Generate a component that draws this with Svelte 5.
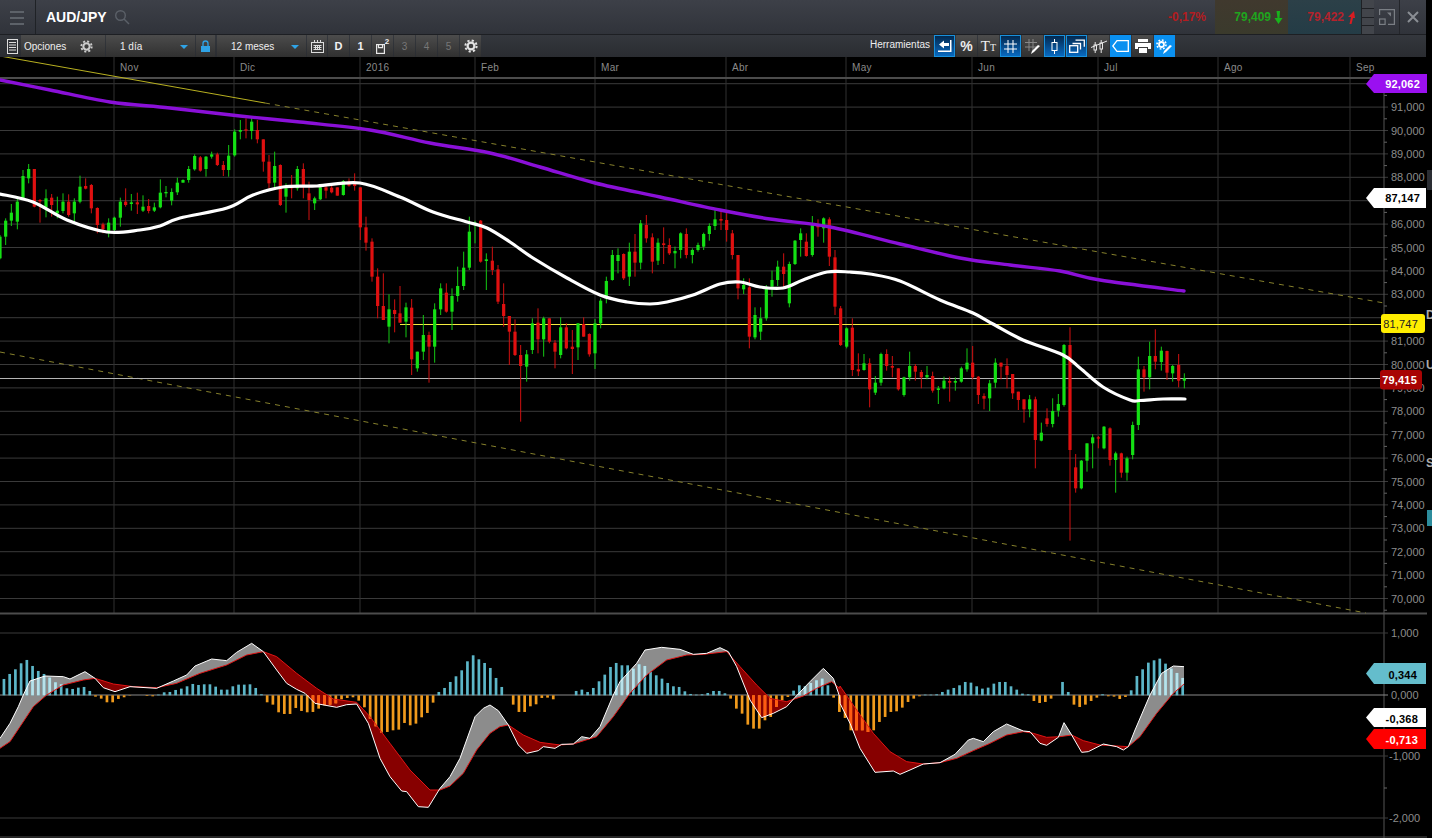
<script>
  // candles as read off the chart: [x, colour, high, bodyTop, bodyBottom, low]
  const z = (ox, oy, rows) =>
    rows.map(([x, c, a, b, d, e]) => ({ x: ox + x / 3, c, hi: oy + a / 3, top: oy + b / 3, bot: oy + d / 3, lo: oy + e / 3 }));

  const candles = [
    ...z(0, 100, [
      [0,"g",405,410,475,478],[17,"g",355,362,410,435],[34,"g",312,338,362,378],[52,"g",290,305,365,388],[69,"g",210,228,298,300],
      [86,"g",192,207,235,250],[103,"r",207,207,320,322],[120,"r",297,300,304,368],[138,"g",268,295,322,352],[155,"r",282,293,315,350],
      [172,"g",290,332,340,355],[189,"g",280,305,333,340],[206,"r",283,305,345,350],[223,"g",295,305,340,372],[240,"g",227,260,305,310],
      [257,"r",235,258,266,268],[274,"r",252,255,325,340],[292,"r",322,324,375,400],[309,"r",368,373,388,400],[326,"g",355,368,395,412],
      [343,"g",350,353,390,395],[361,"g",293,305,353,380],[377,"r",265,305,315,320],[394,"g",282,307,312,332],[412,"r",278,307,313,342],
      [429,"g",286,320,332,336],[446,"r",297,318,333,340],[463,"g",308,322,332,336],[481,"g",238,278,322,325],[498,"g",258,276,280,292],
      [515,"g",265,276,302,316],[532,"g",233,248,277,285],[549,"g",238,240,248,248],[566,"g",198,207,240,248],[584,"g",163,168,208,212],
      [601,"r",168,172,212,215],[618,"g",168,170,207,230],[635,"g",155,163,170,176],[652,"r",158,163,195,198],[670,"r",183,195,210,228],
      [686,"g",135,167,210,230],[704,"g",88,95,166,170],[721,"g",60,90,95,118],[738,"r",55,88,92,115],[755,"g",52,65,93,118],
      [772,"r",60,90,118,130],[790,"r",118,118,185,215],[807,"r",165,185,250,265],[824,"g",155,198,248,265],[841,"r",193,195,315,318],
      [858,"g",250,265,290,338],[875,"r",225,258,265,295],[892,"g",198,207,265,272],[910,"r",190,207,255,295],[927,"r",245,280,300,360],
      [944,"g",290,295,310,330],[961,"g",260,262,298,300],[978,"r",255,262,272,295],[995,"r",258,263,277,280],[1012,"r",262,262,287,287],
      [1030,"g",240,243,285,287],[1047,"r",235,245,257,260],[1064,"r",220,248,258,272],[1081,"r",262,262,382,420],[1098,"r",350,382,428,452],
      [1116,"r",415,425,530,545],[1133,"r",505,530,618,655],[1150,"r",520,618,660,660],[1167,"g",583,628,680,730],[1184,"r",598,630,642,697]
    ]),
    ...z(400, 200, [
      [0,"r",258,340,368,368],[18,"g",308,322,365,412],[35,"r",297,323,478,525],[52,"g",455,455,505,515],[70,"g",345,405,455,480],
      [87,"r",395,405,440,548],[104,"g",310,328,440,488],[122,"g",250,265,328,345],[139,"r",250,278,335,338],[156,"g",265,288,335,390],
      [173,"g",200,258,288,305],[191,"g",155,203,258,270],[208,"g",50,95,203,210],[225,"g",62,68,72,130],[242,"r",60,62,185,188],
      [259,"g",160,178,183,270],[277,"r",140,182,210,225],[294,"r",195,208,305,312],[311,"r",250,312,348,380],[328,"r",348,348,395,495],
      [345,"r",358,395,465,468],[362,"r",435,465,498,665],[380,"g",450,463,500,545],[397,"g",355,370,450,462],[414,"r",325,368,418,460],
      [431,"g",350,355,418,470],[448,"r",355,355,425,430],[465,"r",420,428,455,505],[482,"g",352,382,465,475],[499,"r",370,382,445,448],
      [517,"r",390,440,447,522],[534,"g",370,370,442,480],[551,"r",352,372,410,410],[568,"r",400,402,463,470],[585,"g",357,370,460,507],
      [602,"g",295,302,370,385],[619,"g",230,243,295,310],[637,"g",150,165,240,242],[654,"g",145,165,183,220],[671,"r",160,162,235,240],
      [688,"g",128,155,230,258],[705,"r",102,155,188,230],[722,"g",60,70,188,208],[739,"r",45,75,115,128],[757,"r",100,112,185,220],
      [774,"g",115,128,182,195],[791,"r",82,130,135,192],[808,"r",115,135,160,165],[825,"g",140,153,160,205],[842,"g",97,100,150,175],
      [859,"r",85,102,165,175],[877,"g",145,150,165,190],[894,"g",128,135,150,155],[911,"g",98,102,140,150],[928,"g",70,78,102,122],
      [945,"g",30,58,78,90],[963,"r",30,57,62,90],[980,"r",38,60,90,125],[997,"r",90,100,165,178],[1014,"r",165,165,265,298],
      [1031,"g",235,255,268,282],[1048,"r",235,262,410,445],[1065,"g",322,345,412,418],[1082,"g",322,355,395,420],[1099,"g",255,265,355,362],
      [1116,"g",212,240,260,290],[1133,"g",182,200,240,258],[1151,"r",160,200,222,265],[1168,"g",185,192,310,322],[1185,"g",120,122,192,195],
      [1202,"g",85,100,120,170],[1219,"r",100,125,168,170],[1237,"g",48,72,165,170],[1254,"r",58,75,82,110],[1271,"g",52,55,85,128],
      [1288,"r",52,58,170,198],[1305,"r",150,172,320,345],[1322,"r",318,325,435,438],[1340,"g",382,385,440,445]
    ]),
    ...z(840, 300, [
      [37,"r",55,83,210,228],[55,"r",160,208,214,228],[72,"g",162,190,210,212],[89,"r",175,190,268,322],[106,"g",228,248,278,285],
      [123,"g",158,162,248,257],[140,"r",148,162,198,212],[157,"r",168,198,203,232],[175,"r",205,205,268,272],[192,"g",230,232,285,290],
      [209,"g",155,198,232,242],[226,"r",192,198,215,242],[244,"r",210,216,232,265],[261,"g",198,225,232,238],[278,"r",215,228,272,278],
      [295,"g",258,265,270,312],[312,"g",230,242,265,268],[329,"r",230,243,248,305],[346,"g",232,243,248,272],[364,"g",200,205,245,248],
      [381,"g",145,188,208,215],[398,"r",138,188,232,238],[415,"r",228,230,285,312],[432,"r",280,288,296,328],[449,"g",240,250,295,333],
      [466,"g",175,188,248,264],[483,"r",188,188,200,238],[501,"r",175,198,225,265],[518,"r",222,222,280,297],[535,"r",275,275,300,330],
      [552,"r",298,298,328,368],[569,"g",285,298,328,352],[586,"r",290,298,420,505],[604,"g",368,398,422,424],[621,"r",325,355,372,380],
      [638,"g",295,333,372,382],[655,"g",282,312,332,350],[672,"g",132,135,315,320],[690,"r",82,135,450,722],[707,"r",462,502,565,578],
      [724,"g",480,482,565,568],[741,"g",430,430,482,515],[758,"g",402,412,430,505],[775,"r",408,412,415,445],[792,"g",378,380,445,448],
      [810,"r",382,385,480,497],[827,"g",455,460,480,578],[844,"r",458,460,518,533],[861,"g",470,475,518,542],[878,"g",365,375,465,478],
      [895,"g",170,208,375,390],[912,"r",198,208,232,275],[929,"g",125,168,232,268],[946,"r",88,168,185,208],[964,"g",140,152,186,212],
      [981,"r",152,153,218,240],[998,"g",195,198,220,245],[1016,"r",162,195,242,262],[1033,"g",220,235,242,265]
    ])
  ];

  const pts = (a) => a.map((p) => p.join(",")).join(" ");

  // moving averages are smooth curves, so run them through a catmull-rom spline
  const smooth = (a) => {
    let d = `M${a[0][0]} ${a[0][1]}`;
    for (let i = 0; i < a.length - 1; i++) {
      const p0 = a[i - 1] || a[i];
      const p1 = a[i];
      const p2 = a[i + 1];
      const p3 = a[i + 2] || p2;
      const c1 = [p1[0] + (p2[0] - p0[0]) / 6, p1[1] + (p2[1] - p0[1]) / 6];
      const c2 = [p2[0] - (p3[0] - p1[0]) / 6, p2[1] - (p3[1] - p1[1]) / 6];
      d += `C${c1[0]} ${c1[1]} ${c2[0]} ${c2[1]} ${p2[0]} ${p2[1]}`;
    }
    return d;
  };

  const purple = [[0,80],[50,90],[110,102],[170,108],[240,116],[300,122],[370,130],[430,143],[490,153],[540,167],[595,183],[660,197],[720,210],[770,219],[830,227],[900,244],[960,258],[1010,265],[1060,271],[1100,280],[1184,291]];
  const white = [[0,194],[33,202],[67,220],[107,232],[140,230],[160,226],[180,218],[227,208],[253,195],[283,187],[317,186],[360,183],[400,197],[433,212],[467,222],[487,228],[510,242],[533,258],[567,278],[600,295],[627,302],[650,304],[667,302],[693,295],[720,284],[740,282],[760,287],[783,288],[803,280],[827,272],[850,272],[870,274],[900,281],[940,300],[973,313],[993,324],[1023,340],[1063,355],[1080,368],[1103,387],[1130,400],[1140,400.5],[1163,399],[1185,399]];

  // MACD pane
  const conv = (ox, raw) => raw.map(([x, y]) => [ox + x / 3, 620 + y / 3]);
  const join = (a, b, c) => [...conv(0, a).filter((p) => p[0] <= 450), ...conv(440, b).filter((p) => p[0] > 450 && p[0] <= 840), ...conv(840, c)];

  const signal = join(
    [[0,385],[30,365],[60,320],[100,260],[140,225],[190,195],[250,180],[285,175],[340,192],[400,200],[470,203],[530,190],[600,160],[680,135],[740,105],[790,95],[830,110],[890,160],[950,205],[1000,237],[1070,247],[1110,290],[1170,370],[1230,450],[1290,510],[1320,510],[1350,498]],
    [[30,498],[70,460],[110,390],[150,340],[180,320],[205,315],[250,345],[300,367],[360,375],[400,372],[470,350],[520,290],[570,220],[620,165],[680,120],[740,105],[790,103],[860,95],[900,140],[950,195],[990,235],[1040,245],[1090,228],[1130,205],[1175,185],[1199,205]],
    [[0,198],[50,270],[100,340],[150,395],[200,425],[250,432],[300,428],[350,415],[400,392],[450,370],[500,345],[550,335],[580,340],[620,352],[660,350],[695,345],[730,362],[780,375],[865,380],[900,350],[950,280],[1000,220],[1032,192]]
  );
  const macd = join(
    [[0,355],[30,310],[55,260],[70,225],[90,183],[135,168],[190,170],[210,177],[255,155],[285,175],[310,203],[345,215],[390,200],[470,205],[520,183],[560,165],[585,138],[635,117],[680,122],[710,97],[755,70],[790,95],[830,150],[860,190],[890,208],[915,220],[945,250],[1010,262],[1040,254],[1070,252],[1105,310],[1140,415],[1170,470],[1205,513],[1220,515],[1255,560],[1285,562],[1320,505],[1350,470]],
    [[30,470],[60,415],[105,290],[130,265],[150,255],[175,272],[205,315],[235,375],[260,400],[295,392],[310,380],[345,385],[365,373],[400,372],[425,350],[450,355],[480,320],[520,225],[540,185],[590,130],[615,90],[665,82],[720,88],[760,103],[800,100],[840,83],[865,95],[890,140],[930,240],[965,293],[1000,280],[1040,260],[1065,232],[1110,185],[1150,145],[1180,175],[1199,230]],
    [[0,250],[30,310],[60,385],[105,457],[160,453],[180,463],[210,450],[250,432],[300,428],[345,403],[385,360],[400,355],[430,365],[460,335],[500,312],[550,333],[570,335],[600,370],[620,376],[655,352],[672,308],[695,345],[725,397],[745,395],[790,372],[830,380],[850,390],[865,380],[885,330],[930,225],[965,160],[1000,138],[1032,140]]
  );

  const at = (line, x) => {
    for (let i = 1; i < line.length; i++) {
      if (x <= line[i][0]) {
        const [x0, y0] = line[i - 1];
        const [x1, y1] = line[i];
        return y0 + ((y1 - y0) * (x - x0)) / (x1 - x0);
      }
    }
    return line[line.length - 1][1];
  };

  // split the band between the two lines where they cross
  const bands = { gray: [], red: [] };
  let run = [];
  let kind = null;
  const flush = () => {
    if (run.length > 1) {
      bands[kind].push(pts([...run.map((r) => [r[0], r[1]]), ...run.slice().reverse().map((r) => [r[0], r[2]])]));
    }
  };
  for (let x = 0; x <= 1184; x++) {
    const m = at(macd, x);
    const s = at(signal, x);
    const k = m <= s ? "gray" : "red";
    if (k !== kind) {
      if (kind) run.push([x, m, s]);
      flush();
      run = run.length ? [run[run.length - 1]] : [];
      kind = k;
    }
    run.push([x, m, s]);
  }
  flush();

  const ZERO = 695.3;
  const hist = [
    49,64,78,96,106,88,73,64,53,39,33,21,19,23,25,13,-4,-10,-21,-21,-11,-6,-1,0,0,-2,-3,2,9,10,16,20,27,34,31,33,33,26,17,17,27,32,32,33,22,3,-21,-28,-51,-56,-56,-38,-47,-51,-50,-40,-30,-28,-24,-12,-8,-6,-16,-36,-70,-93,-112,-110,-105,-103,-83,-90,-85,-66,-53,-22,10,
    22,40,57,75,102,120,108,97,82,52,25,0,-28,-50,-50,-33,-27,-8,-7,-12,0,0,0,13,17,10,22,42,62,85,97,90,90,80,93,88,70,60,50,37,27,25,12,4,2,3,7,13,13,6,-10,-40,-55,-88,-100,-100,-75,-65,-35,-15,-5,14,30,27,37,45,50,30,-7,-50,
    -68,-105,-105,-105,-110,-105,-80,-65,-50,-48,-37,-20,-10,-3,2,2,3,10,17,22,30,40,38,27,20,23,35,40,40,27,17,5,3,-17,-23,-20,-10,0,40,10,-28,-35,-28,-17,-7,3,-3,-4,-11,-5,15,58,78,98,105,110,95,80,67,52
  ]
    .map((h, i) => ({ x: 2.6 + i * 5.722, h: h / 3 }))
    .filter((b) => b.h !== 0);

  const months = [["Nov",114],["Dic",234],["2016",360],["Feb",475],["Mar",595],["Abr",726],["May",846],["Jun",972],["Jul",1098],["Ago",1218],["Sep",1350]];
  const STEP = 23.4;
  const priceY = (p) => 177.3 + (88 - p) * STEP;
  const prices = Array.from({ length: 23 }, (_, i) => 92 - i);
  // these sit fully behind a value tag
  const covered = [92, 87, 82];
  const macdLevels = [["1,000",633],["0,000",695],["-1,000",756],["-2,000",818]];
</script>

<div class="app">
  <header class="topbar">
    <div class="menu"><span></span><span></span><span></span></div>
    <div class="symbol">AUD/JPY</div>
    <svg class="search" width="16" height="16" viewBox="0 0 16 16" fill="none" stroke="#5b6068" stroke-width="1.4">
      <circle cx="6.5" cy="6.5" r="4.8" />
      <path d="M10 10l5 5" />
    </svg>
    <div class="grow"></div>
    <div class="change">-0,17%</div>
    <div class="quote sell">
      <span>79,409</span>
      <svg width="9" height="13" viewBox="0 0 9 13"><path d="M2.5 0h3.5l-.5 7h3l-4 6-4-6h3z" fill="#18b21c" /></svg>
    </div>
    <div class="quote buy">
      <span>79,422</span>
      <svg width="9" height="13" viewBox="0 0 9 13"><path d="M2.5 13l1.500-7H1l6-6 1 7H6l-1.500 6z" fill="#d81c22" /></svg>
    </div>
    <div class="slots"><i></i><i></i><i></i><i></i></div>
    <div class="wincell">
      <svg width="16" height="16" viewBox="0 0 16 16" fill="none" stroke="#7a7e84" stroke-width="1.2">
        <path d="M.6 6V.6h14.800v14.800H9" />
        <rect x=".6" y="10" width="5.500" height="5.400" />
        <path d="M8 3.500h4v4z" fill="#7a7e84" stroke="none" />
      </svg>
    </div>
    <div class="wincell close">
      <svg width="12" height="12" viewBox="0 0 12 12" stroke="#8a8e94" stroke-width="2"><path d="M1 1l10 10M11 1L1 11" /></svg>
    </div>
  </header>

  <div class="tools">
    <button class="cell first">
      <svg width="11" height="15" viewBox="0 0 11 15" fill="none" stroke="#ddd"><rect x=".5" y=".5" width="10" height="14" /><path d="M2 3.500h7M2 6h7M2 8.500h7M2 11h7" /></svg>
    </button>
    <button class="cell opts">
      <span>Opciones</span>
      <svg class="gear" width="13" height="13" viewBox="0 0 14 14" fill="none" stroke="#ccc"><circle cx="7" cy="7" r="3.400" stroke-width="2.200" /><circle cx="7" cy="7" r="5.600" stroke-width="2" stroke-dasharray="2.200 2.200" /></svg>
    </button>
    <button class="cell select day"><span>1 día</span><b></b></button>
    <button class="cell lock">
      <svg width="11" height="13" viewBox="0 0 11 13"><path d="M3 6V3.500a2.500 2.500 0 0 1 5 0V6" fill="none" stroke="#2fa3e6" stroke-width="1.300" /><rect x="1" y="6" width="9" height="6" fill="#2fa3e6" /></svg>
    </button>
    <button class="cell select range"><span>12 meses</span><b></b></button>
    <button class="cell small">
      <svg width="13" height="13" viewBox="0 0 13 13" fill="none" stroke="#ddd"><rect x=".5" y="2.500" width="12" height="10" /><path d="M3.500 0v3M6.500 0v3M9.500 0v3M2.500 5.500h8M2.500 7.500h8M2.500 9.500h8M4.500 5v5M6.500 5v5M8.500 5v5" /></svg>
    </button>
    <button class="cell num strong">D</button>
    <button class="cell num strong">1</button>
    <button class="cell num save">
      <svg width="9" height="10" viewBox="0 0 9 10" fill="none" stroke="#e8e8e8" stroke-width="1.200"><rect x=".6" y=".6" width="7.800" height="8.800" /><path d="M2.500.6v3h4v-3" /></svg>
      <sup>2</sup>
    </button>
    <button class="cell num dim">3</button>
    <button class="cell num dim">4</button>
    <button class="cell num dim">5</button>
    <button class="cell num">
      <svg width="14" height="14" viewBox="0 0 14 14" fill="none" stroke="#e2e2e2"><circle cx="7" cy="7" r="3.400" stroke-width="2.200" /><circle cx="7" cy="7" r="5.600" stroke-width="2" stroke-dasharray="2.200 2.200" /></svg>
    </button>

    <div class="grow"></div>
    <span class="tools-label">Herramientas</span>
    <button class="cell tool blue">
      <svg width="15" height="13" viewBox="0 0 15 13" fill="#fff"><path d="M2 4.500l5-4v2.500h5v3H7V8.500z" /><path d="M13 0h1.500v12H1v-1.400h12z" /></svg>
    </button>
    <button class="cell tool pct">%</button>
    <button class="cell tool ttext">T<small>T</small></button>
    <button class="cell tool blue">
      <svg width="13" height="13" viewBox="0 0 13 13" stroke="#fff"><path d="M4 0v13M9 0v13M0 4h13M0 9h13" /></svg>
    </button>
    <button class="cell tool">
      <svg width="16" height="15" viewBox="0 0 16 15" fill="none"><path d="M4 0v12M8 0v12M0 3.500h12M0 8h12" stroke="#888" /><path d="M15 7l-6 6-3 2 1-3 6-6z" fill="#fff" /></svg>
    </button>
    <button class="cell tool blue">
      <svg width="7" height="15" viewBox="0 0 7 15" fill="none" stroke="#fff"><rect x="1" y="3.500" width="5" height="8" /><path d="M3.500 0v3.500M3.500 11.500V15" /></svg>
    </button>
    <button class="cell tool blue">
      <svg width="16" height="14" viewBox="0 0 16 14" fill="none" stroke="#fff" stroke-width="1.300"><rect x=".7" y="6.700" width="8" height="6.600" /><path d="M3.500 4.500h8v6M6.500 1.200h8.800v6.500" /></svg>
    </button>
    <button class="cell tool">
      <svg width="16" height="15" viewBox="0 0 16 15" fill="none" stroke="#e8e8e8"><rect x="3" y="6" width="2.500" height="5" /><rect x="9" y="4" width="2.500" height="6" /><path d="M4.200 3v3M4.200 11v3M10.200 1v3M10.200 10v4M0 8.500L16 2" /></svg>
    </button>
    <button class="cell tool bright">
      <svg width="17" height="12" viewBox="0 0 17 12" fill="none" stroke="#fff" stroke-width="1.300"><path d="M5 .7h11.300v10.600H5L.8 6z" /></svg>
    </button>
    <button class="cell tool">
      <svg width="16" height="14" viewBox="0 0 16 14" fill="#fff"><rect x="3" y="0" width="10" height="3" /><path d="M0 4h16v6h-3V8H3v2H0z" /><rect x="4" y="9" width="8" height="5" /></svg>
    </button>
    <button class="cell tool bright">
      <svg width="17" height="15" viewBox="0 0 17 15" fill="none"><circle cx="5.500" cy="5.500" r="2.500" stroke="#fff" stroke-width="1.800" /><circle cx="5.500" cy="5.500" r="4.500" stroke="#fff" stroke-width="1.600" stroke-dasharray="1.800 1.700" /><path d="M16 7l-6 6-3 2 1-3 6-6z" fill="#fff" /></svg>
    </button>
    <div class="tools-end"></div>
  </div>

  <svg class="chart" viewBox="0 57 1432 781" width="1432" height="781">
    <defs>
      <clipPath id="overGray">{#each bands.gray as p}<polygon points={p} />{/each}</clipPath>
      <clipPath id="overRed">{#each bands.red as p}<polygon points={p} />{/each}</clipPath>
    </defs>

    <!-- grid -->
    {#each prices as p}
      <line x1="0" x2="1388" y1={priceY(p)} y2={priceY(p)} class="grid" />
      <line x1="1384" x2="1387" y1={priceY(p) + STEP / 2} y2={priceY(p) + STEP / 2} class="tick" />
      {#if !covered.includes(p)}
        <text x="1391" y={priceY(p) + 4} class="axis">{p},000</text>
      {/if}
    {/each}
    {#each months as [label, x]}
      <line x1={x} x2={x} y1="57" y2="613" class="vgrid" />
      <text x={x + 6} y="71" class="month">{label}</text>
    {/each}
    <line x1="0" x2="1384" y1="78" y2="78" class="sep" />
    <line x1="0" x2="1427" y1="613.5" y2="613.5" class="sep" />
    <line x1="1384" x2="1384" y1="78" y2="838" class="yaxis" />

    <!-- trend lines -->
    <line x1="0" y1="56" x2="265" y2="103" class="trend-solid" />
    <line x1="265" y1="103" x2="1384" y2="303" class="trend" />
    <line x1="0" y1="352" x2="1366" y2="613" class="trend" />
    <line x1="400" x2="1384" y1="324.500" y2="324.500" class="level" />
    <line x1="0" x2="1384" y1="378.500" y2="378.500" class="last" />

    <!-- candles -->
    {#each candles as k}
      <line x1={k.x} x2={k.x} y1={k.hi} y2={k.lo} class={k.c === "g" ? "wick up" : "wick down"} />
      <rect x={k.x - 1.6} y={k.top} width="3.200" height={Math.max(k.bot - k.top, 1.2)} class={k.c === "g" ? "body up" : "body down"} />
    {/each}

    <path d={smooth(white)} class="ma white" />
    <path d={smooth(purple)} class="ma purple" />

    <!-- MACD pane -->
    {#each macdLevels as [label, y]}
      <line x1="0" x2="1388" y1={y} y2={y} class={label === "0,000" ? "zero" : "grid"} />
      <text x={label[0] === "-" ? 1389 : 1391} y={y + 4} class="axis">{label}</text>
    {/each}
    <line x1="1384" x2="1387" y1="788" y2="788" class="tick" />
    <line x1="0" x2="1427" y1="837" y2="837" class="sep thin" />

    {#each bands.gray as p}<polygon points={p} fill="#8c8c8c" />{/each}
    {#each bands.red as p}<polygon points={p} fill="#870000" />{/each}
    {#each hist as b}
      <rect x={b.x} y={b.h > 0 ? ZERO - b.h : ZERO} width="2.700" height={Math.abs(b.h)} fill={b.h > 0 ? "#5cb6c8" : "#f09a1c"} />
    {/each}
    <g clip-path="url(#overGray)">
      {#each hist as b}
        {#if b.h > 0}<rect x={b.x} y={ZERO - b.h} width="2.700" height={b.h} fill="#b8e2ea" />{/if}
      {/each}
    </g>
    <g clip-path="url(#overRed)">
      {#each hist as b}
        {#if b.h < 0}<rect x={b.x} y={ZERO} width="2.700" height={-b.h} fill="#ff5a12" />{/if}
      {/each}
    </g>
    <polyline points={pts(signal)} class="sig" />
    <polyline points={pts(macd)} class="mac" />

    <!-- value tags -->
    <polygon points="1366,84 1374,74 1427,74 1427,93 1374,93" fill="#9a10f0" />
    <text x="1420" y="88" class="tag light">92,062</text>
    <polygon points="1366,198 1374,188 1426,188 1426,208 1374,208" fill="#fff" />
    <text x="1420" y="202" class="tag">87,147</text>
    <rect x="1381" y="314" width="44" height="19" rx="3" fill="#ffee00" />
    <text x="1418" y="328" class="tag plain">81,747</text>
    <rect x="1380" y="370" width="42" height="19.500" rx="3" fill="#a80404" />
    <text x="1417" y="384" class="tag light">79,415</text>
    <polygon points="1366,673.500 1374,663 1426,663 1426,684 1374,684" fill="#64bdcc" />
    <text x="1417" y="679" class="tag">0,344</text>
    <polygon points="1366,717.500 1374,708 1426,708 1426,727 1374,727" fill="#fff" />
    <text x="1418" y="723" class="tag">-0,368</text>
    <polygon points="1366,739 1374,729 1426,729 1426,749 1374,749" fill="#f00" />
    <text x="1418" y="744" class="tag light">-0,713</text>

    <!-- window behind, cut by the screen edge -->
    <rect x="1427" y="170" width="5" height="20" fill="#2a2d33" />
    <rect x="1427" y="510" width="5" height="16" fill="#2c8c9c" />
    <text x="1426" y="319" class="edge">D</text>
    <text x="1426" y="369" class="edge">U</text>
    <text x="1426" y="467" class="edge">S</text>
  </svg>
</div>

<style>
  :global(body) {
    background: #000;
    overflow: hidden;
  }
  .app {
    width: 1432px;
    height: 838px;
    overflow: hidden;
    font-family: "Liberation Sans", Arial, sans-serif;
    display: flex;
    flex-direction: column;
    background: #000;
  }
  .grow {
    flex: 1;
  }

  .topbar {
    width: 1426px;
    height: 35px;
    flex: none;
    box-sizing: border-box;
    display: flex;
    align-items: center;
    background: linear-gradient(#3d4048, #30333a);
    border-bottom: 1px solid #1d1f23;
  }
  .menu {
    width: 36px;
    height: 100%;
    box-sizing: border-box;
    padding: 11px 0 0 10px;
    border-right: 1px solid #1f2226;
    display: flex;
    flex-direction: column;
    gap: 4px;
  }
  .menu span {
    display: block;
    width: 14px;
    height: 2px;
    background: #5d6269;
  }
  .symbol {
    margin-left: 10px;
    color: #fff;
    font-size: 14px;
    font-weight: bold;
  }
  .search {
    margin-left: 7px;
  }
  .change {
    color: #b41c20;
    font-size: 12px;
    font-weight: bold;
    margin-right: 9px;
  }
  .quote {
    width: 73px;
    height: 100%;
    display: flex;
    align-items: center;
    justify-content: flex-end;
    gap: 3px;
    padding-right: 5px;
    box-sizing: border-box;
    font-size: 12px;
    font-weight: bold;
  }
  .sell {
    background: linear-gradient(#40392e, #3a3a2c);
    color: #1ea51e;
  }
  .buy {
    background: linear-gradient(#2c4048, #243c46);
    color: #b4222c;
  }
  .slots {
    width: 12px;
    height: 100%;
    display: flex;
    flex-direction: column;
    gap: 1px;
    padding-left: 1px;
    background: #1e2024;
  }
  .slots i {
    flex: 1;
    background: #42454b;
  }
  .wincell {
    width: 26px;
    height: 100%;
    display: flex;
    align-items: center;
    justify-content: center;
    box-sizing: border-box;
    border-right: 1px solid #23252a;
  }
  .close {
    border-right: 0;
  }

  .tools {
    width: 1426px;
    height: 22px;
    flex: none;
    display: flex;
    gap: 1px;
    background: linear-gradient(#34373d, #2a2c31);
    padding-left: 4px;
    box-sizing: border-box;
  }
  .cell {
    all: unset;
    box-sizing: border-box;
    height: 22px;
    display: flex;
    align-items: center;
    justify-content: center;
    background: linear-gradient(#4c4c4c, #303030);
    color: #eee;
    font-size: 10px;
    flex: none;
  }
  .first {
    width: 16px;
    background: none;
  }
  .opts {
    width: 84px;
    justify-content: space-between;
    padding: 0 12px 0 3px;
  }
  .select {
    justify-content: flex-start;
    position: relative;
  }
  .select b {
    position: absolute;
    right: 7px;
    top: 10px;
    border-left: 4px solid transparent;
    border-right: 4px solid transparent;
    border-top: 4px solid #2fa3e6;
  }
  .day {
    width: 89px;
    padding-left: 14px;
  }
  .lock {
    width: 19px;
  }
  .range {
    width: 89px;
    padding-left: 14px;
    margin-left: 1px;
  }
  .small {
    width: 20px;
  }
  .num {
    width: 21px;
    font-weight: bold;
    font-size: 11px;
  }
  .strong {
    color: #f2f2f2;
  }
  .dim {
    color: #777;
    font-weight: normal;
    font-size: 10px;
  }
  .save {
    gap: 0;
    align-items: flex-end;
    padding-bottom: 3px;
  }
  .save sup {
    font-size: 8px;
    line-height: 8px;
    margin-bottom: 8px;
  }
  .tools-label {
    color: #eee;
    font-size: 10px;
    line-height: 19px;
    margin-right: 3px;
  }
  .tool {
    width: 21px;
  }
  .blue {
    background: linear-gradient(#03294f, #0869c0);
    border: 1px solid #1790dc;
  }
  .bright {
    background: #0a90f0;
  }
  .pct {
    font-size: 14px;
    font-weight: bold;
  }
  .ttext {
    font-family: "Liberation Serif", serif;
    font-size: 15px;
    align-items: baseline;
    padding-top: 3px;
  }
  .ttext small {
    font-size: 10px;
  }
  .tools-end {
    width: 250px;
  }

  .chart {
    display: block;
    flex: none;
    background: #000;
  }
  .grid {
    stroke: #3a3a3a;
    stroke-width: 1;
  }
  .zero {
    stroke: #8a8a8a;
    stroke-width: 1;
  }
  .vgrid {
    stroke: #303030;
    stroke-width: 1;
  }
  .tick {
    stroke: #666;
    stroke-width: 1;
  }
  .sep {
    stroke: #4c4c4c;
    stroke-width: 2;
  }
  .thin {
    stroke-width: 1;
  }
  .yaxis {
    stroke: #555;
    stroke-width: 1;
  }
  .trend-solid {
    stroke: #b8b020;
    stroke-width: 1;
  }
  .trend {
    stroke: #86802c;
    stroke-width: 1;
    stroke-dasharray: 5 5;
  }
  .level {
    stroke: #f4ec40;
    stroke-width: 1;
  }
  .last {
    stroke: #b4b4b4;
    stroke-width: 1;
  }
  .wick {
    stroke-width: 1;
  }
  .wick.up {
    stroke: #14c814;
  }
  .wick.down {
    stroke: #d01010;
  }
  .body.up {
    fill: #14e014;
  }
  .body.down {
    fill: #e01010;
  }
  .ma {
    fill: none;
    stroke-linejoin: round;
    stroke-linecap: round;
  }
  .ma.white {
    stroke: #fff;
    stroke-width: 3.200;
  }
  .ma.purple {
    stroke: #8a10d8;
    stroke-width: 3.400;
  }
  .sig {
    fill: none;
    stroke: #e01414;
    stroke-width: 1;
  }
  .mac {
    fill: none;
    stroke: #fff;
    stroke-width: 1;
  }
  .axis {
    fill: #8c8c8c;
    font-size: 11px;
  }
  .month {
    fill: #8a8a8a;
    font-size: 10px;
    letter-spacing: 0.3px;
  }
  .tag {
    fill: #000;
    font-size: 11px;
    font-weight: bold;
    text-anchor: end;
    letter-spacing: 0.2px;
  }
  .tag.light {
    fill: #fff;
  }
  .tag.plain {
    font-weight: normal;
    fill: #222;
  }
  .edge {
    fill: #aaa;
    font-size: 12px;
    font-weight: bold;
  }
</style>
